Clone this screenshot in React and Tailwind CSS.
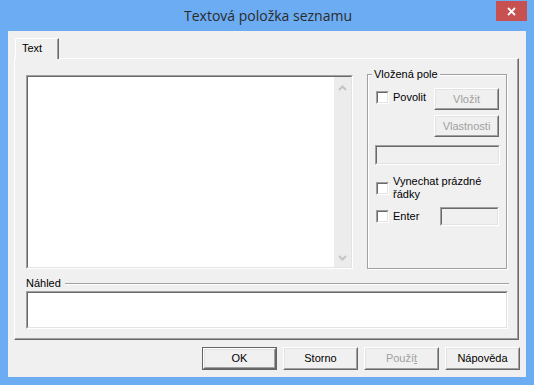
import React from "react";

const sunkenOuter = "border border-t-[#a0a0a0] border-l-[#a0a0a0] border-r-white border-b-white";
const sunkenInner = "border border-t-[#696969] border-l-[#696969] border-r-[#e3e3e3] border-b-[#e3e3e3]";

function Sunken({ className = "", inner = "bg-white", children }) {
  return (
    <div className={`${sunkenOuter} ${className} flex`}>
      <div className={`${sunkenInner} ${inner} flex-1 flex`}>{children}</div>
    </div>
  );
}

function Checkbox() {
  return (
    <div className={`${sunkenOuter} w-[13px] h-[13px] shrink-0 flex`}>
      <div className={`${sunkenInner} bg-white flex-1`} />
    </div>
  );
}

function Button({ children, disabled, isDefault, className = "" }) {
  const body = (
    <div className="border border-t-white border-l-white border-r-[#696969] border-b-[#696969] flex-1 flex">
      <div
        className={`border border-t-[#e3e3e3] border-l-[#e3e3e3] border-r-[#a0a0a0] border-b-[#a0a0a0] flex-1 flex items-center justify-center bg-[#f0f0f0] ${
          disabled ? "text-[#a0a0a0]" : "text-black"
        }`}
      >
        {children}
      </div>
    </div>
  );
  if (isDefault) {
    return <div className={`border border-[#646464] flex ${className}`}>{body}</div>;
  }
  return <div className={`flex ${className}`}>{body}</div>;
}

export default function App() {
  return (
    <div className="w-[534px] h-[385px] bg-[#6cacf3] flex flex-col font-['Liberation_Sans',Arial,sans-serif] text-[11px] leading-[13px] text-black overflow-hidden">
      {/* Title bar */}
      <div className="h-[31px] relative flex items-center justify-center">
        <span className="font-['Open_Sans',sans-serif] text-[14px] leading-[20px] text-[#2b2b2b] pl-[2px]">
          Textová položka seznamu
        </span>
        <div className="absolute right-[7px] top-[1px] w-[31px] h-[20px] bg-[#c75050] flex items-center justify-center">
          <svg width="9" height="9" viewBox="0 0 9 9">
            <path d="M1 1L8 8M8 1L1 8" stroke="white" strokeWidth="1.8" />
          </svg>
        </div>
      </div>

      {/* Client */}
      <div className="mx-[8px] h-[346px] bg-[#f0f0f0] flex flex-col">
        {/* Tabs */}
        <div className="pt-[7px] flex">
          <div className="ml-[7px] w-[44px] h-[21px] -mb-[1px] relative z-10 bg-[#f0f0f0] border-t border-l border-r border-t-white border-l-white border-r-[#696969] shadow-[inset_-1px_0_0_#a0a0a0] rounded-tl-[2px] pl-[6px] pt-[3px]">
            Text
          </div>
        </div>

        {/* Panel */}
        <div className="ml-[6px] w-[505px] h-[282px] border border-t-white border-l-white border-r-[#696969] border-b-[#696969] shadow-[inset_-1px_-1px_0_#a0a0a0] flex flex-col">
          <div className="pt-[15px] pl-[11px] flex items-start">
            {/* Multiline edit */}
            <Sunken className="mt-[1px] w-[327px] h-[194px]">
              <div className="flex-1" />
              <div className="w-[17px] bg-[#ececec] flex flex-col items-center justify-between pt-[8px] pb-[6px]">
                <svg width="9" height="6" viewBox="0 0 9 6">
                  <path d="M1 5L4.5 1.5L8 5" stroke="#c4c4c4" strokeWidth="2" fill="none" />
                </svg>
                <svg width="9" height="6" viewBox="0 0 9 6">
                  <path d="M1 1L4.5 4.5L8 1" stroke="#c4c4c4" strokeWidth="2" fill="none" />
                </svg>
              </div>
            </Sunken>

            {/* Group box */}
            <div className="ml-[14px] w-[140px] h-[195px] relative border border-[#a0a0a0] shadow-[inset_1px_1px_0_#fff,1px_1px_0_#fff] flex flex-col pl-[7px] pr-[7px]">
              <span className="absolute left-[4px] -top-[7px] px-[2px] bg-[#f0f0f0]">Vložená pole</span>

              <div className="mt-[13px] flex items-start">
                <div className="ml-[1px] mt-[3px] flex items-center">
                  <Checkbox />
                  <span className="ml-[4px]">Povolit</span>
                </div>
                <Button disabled className="ml-auto w-[65px] h-[22px]">Vložit</Button>
              </div>
              <div className="mt-[5px] flex justify-end">
                <Button disabled className="w-[65px] h-[22px]">Vlastnosti</Button>
              </div>
              <Sunken className="mt-[8px] w-[125px] h-[20px]" inner="bg-[#f0f0f0]" />

              <div className="mt-[10px] ml-[1px] flex items-center">
                <Checkbox />
                <span className="ml-[4px]">
                  Vynechat prázdné
                  <br />
                  řádky
                </span>
              </div>

              <div className="mt-[6px] h-[19px] flex items-center">
                <div className="ml-[1px] flex items-center">
                  <Checkbox />
                  <span className="ml-[4px]">Enter</span>
                </div>
                <Sunken className="ml-auto w-[59px] h-[19px]" inner="bg-[#f0f0f0]" />
              </div>
            </div>
          </div>

          {/* Preview */}
          <div className="mt-[8px] pl-[11px] pr-[9px] h-[13px] flex items-center">
            <span>Náhled</span>
            <div className="ml-[4px] flex-1 h-[2px] border-t border-t-[#a0a0a0] border-b border-b-white" />
          </div>
          <Sunken className="mt-[1px] ml-[11px] w-[482px] h-[38px]" />
        </div>

        {/* Buttons */}
        <div className="mt-[7px] pr-[6px] flex justify-end gap-[6px]">
          <Button isDefault className="w-[75px] h-[23px]">OK</Button>
          <Button className="w-[75px] h-[23px]">Storno</Button>
          <Button disabled className="w-[75px] h-[23px]">
            <span>
              Použí<span className="underline">t</span>
            </span>
          </Button>
          <Button className="w-[75px] h-[23px]">Nápověda</Button>
        </div>
      </div>
    </div>
  );
}
